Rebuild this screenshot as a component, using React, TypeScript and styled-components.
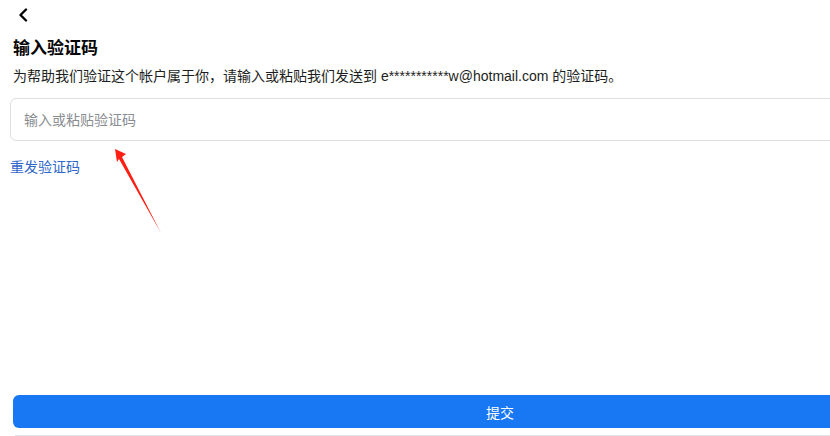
import React from "react";
import styled, { createGlobalStyle } from "styled-components";

const Global = createGlobalStyle`
  html, body { margin: 0; padding: 0; overflow: hidden; background: #fff; }
  body { font-family: "Liberation Sans", Arial, "Noto Sans CJK SC", sans-serif; color: #050505; }
  * { box-sizing: border-box; }
`;

const Page = styled.div`
  position: relative;
  width: 1000px;
  height: 436px;
  display: flex;
  flex-direction: column;
  padding: 0 10px;
`;

const BackBar = styled.div`
  height: 30px;
  display: flex;
  align-items: center;
  padding-left: 6px;
`;

const BackButton = styled.button`
  border: none;
  background: none;
  padding: 0;
  width: 14px;
  height: 16px;
  display: flex;
  align-items: center;
  justify-content: center;
  cursor: pointer;
`;

const Title = styled.h1`
  margin: 7px 0 0 3px;
  font-size: 17px;
  line-height: 24px;
  font-weight: 700;
  font-family: "Liberation Sans", Arial, "Noto Sans CJK SC", sans-serif;
`;

const Subtitle = styled.p`
  margin: 5px 0 0 3px;
  font-size: 14px;
  line-height: 20px;
  color: #1c1e21;
`;

const Input = styled.input`
  margin-top: 12px;
  width: 990px;
  height: 43px;
  border: 1px solid #dddfe2;
  border-radius: 6px;
  padding: 0 13px;
  font-size: 14px;
  font-family: "Liberation Sans", Arial, "Noto Sans CJK SC", sans-serif;
  outline: none;
  &::placeholder { color: #8a8d91; }
`;

const ResendLink = styled.a`
  margin-top: 16px;
  font-size: 14px;
  line-height: 20px;
  color: #2f66c9;
  text-decoration: none;
  align-self: flex-start;
  cursor: pointer;
`;

const Footer = styled.div`
  margin-top: auto;
  padding-left: 3px;
  display: flex;
  flex-direction: column;
`;

const SubmitButton = styled.button`
  width: 974px;
  height: 33px;
  border: none;
  border-radius: 6px;
  background: #1877f2;
  color: #fff;
  font-size: 14px;
  font-family: "Liberation Sans", Arial, "Noto Sans CJK SC", sans-serif;
  cursor: pointer;
`;

const Divider = styled.div`
  margin: 7px 0 0 2px;
  height: 1px;
  background: #e4e6eb;
`;

const Annotation = styled.svg`
  position: absolute;
  left: 0;
  top: 0;
  pointer-events: none;
`;

export default function App() {
  return (
    <>
      <Global />
      <Page>
        <BackBar>
          <BackButton aria-label="返回">
            <svg width="10" height="14" viewBox="0 0 10 14">
              <path d="M8 1.5 L2.5 7 L8 12.5" fill="none" stroke="#050505" strokeWidth="2.4" strokeLinecap="round" strokeLinejoin="round" />
            </svg>
          </BackButton>
        </BackBar>
        <Title>输入验证码</Title>
        <Subtitle>为帮助我们验证这个帐户属于你，请输入或粘贴我们发送到 e***********w@hotmail.com 的验证码。</Subtitle>
        <Input placeholder="输入或粘贴验证码" />
        <ResendLink>重发验证码</ResendLink>
        <Footer>
          <SubmitButton>提交</SubmitButton>
          <Divider />
        </Footer>
        <Annotation width="200" height="250" viewBox="0 0 200 250">
          <polygon points="115,149 126,154 122,157 161,233 119,159 117,162" fill="#ff1f14" />
        </Annotation>
      </Page>
    </>
  );
}
